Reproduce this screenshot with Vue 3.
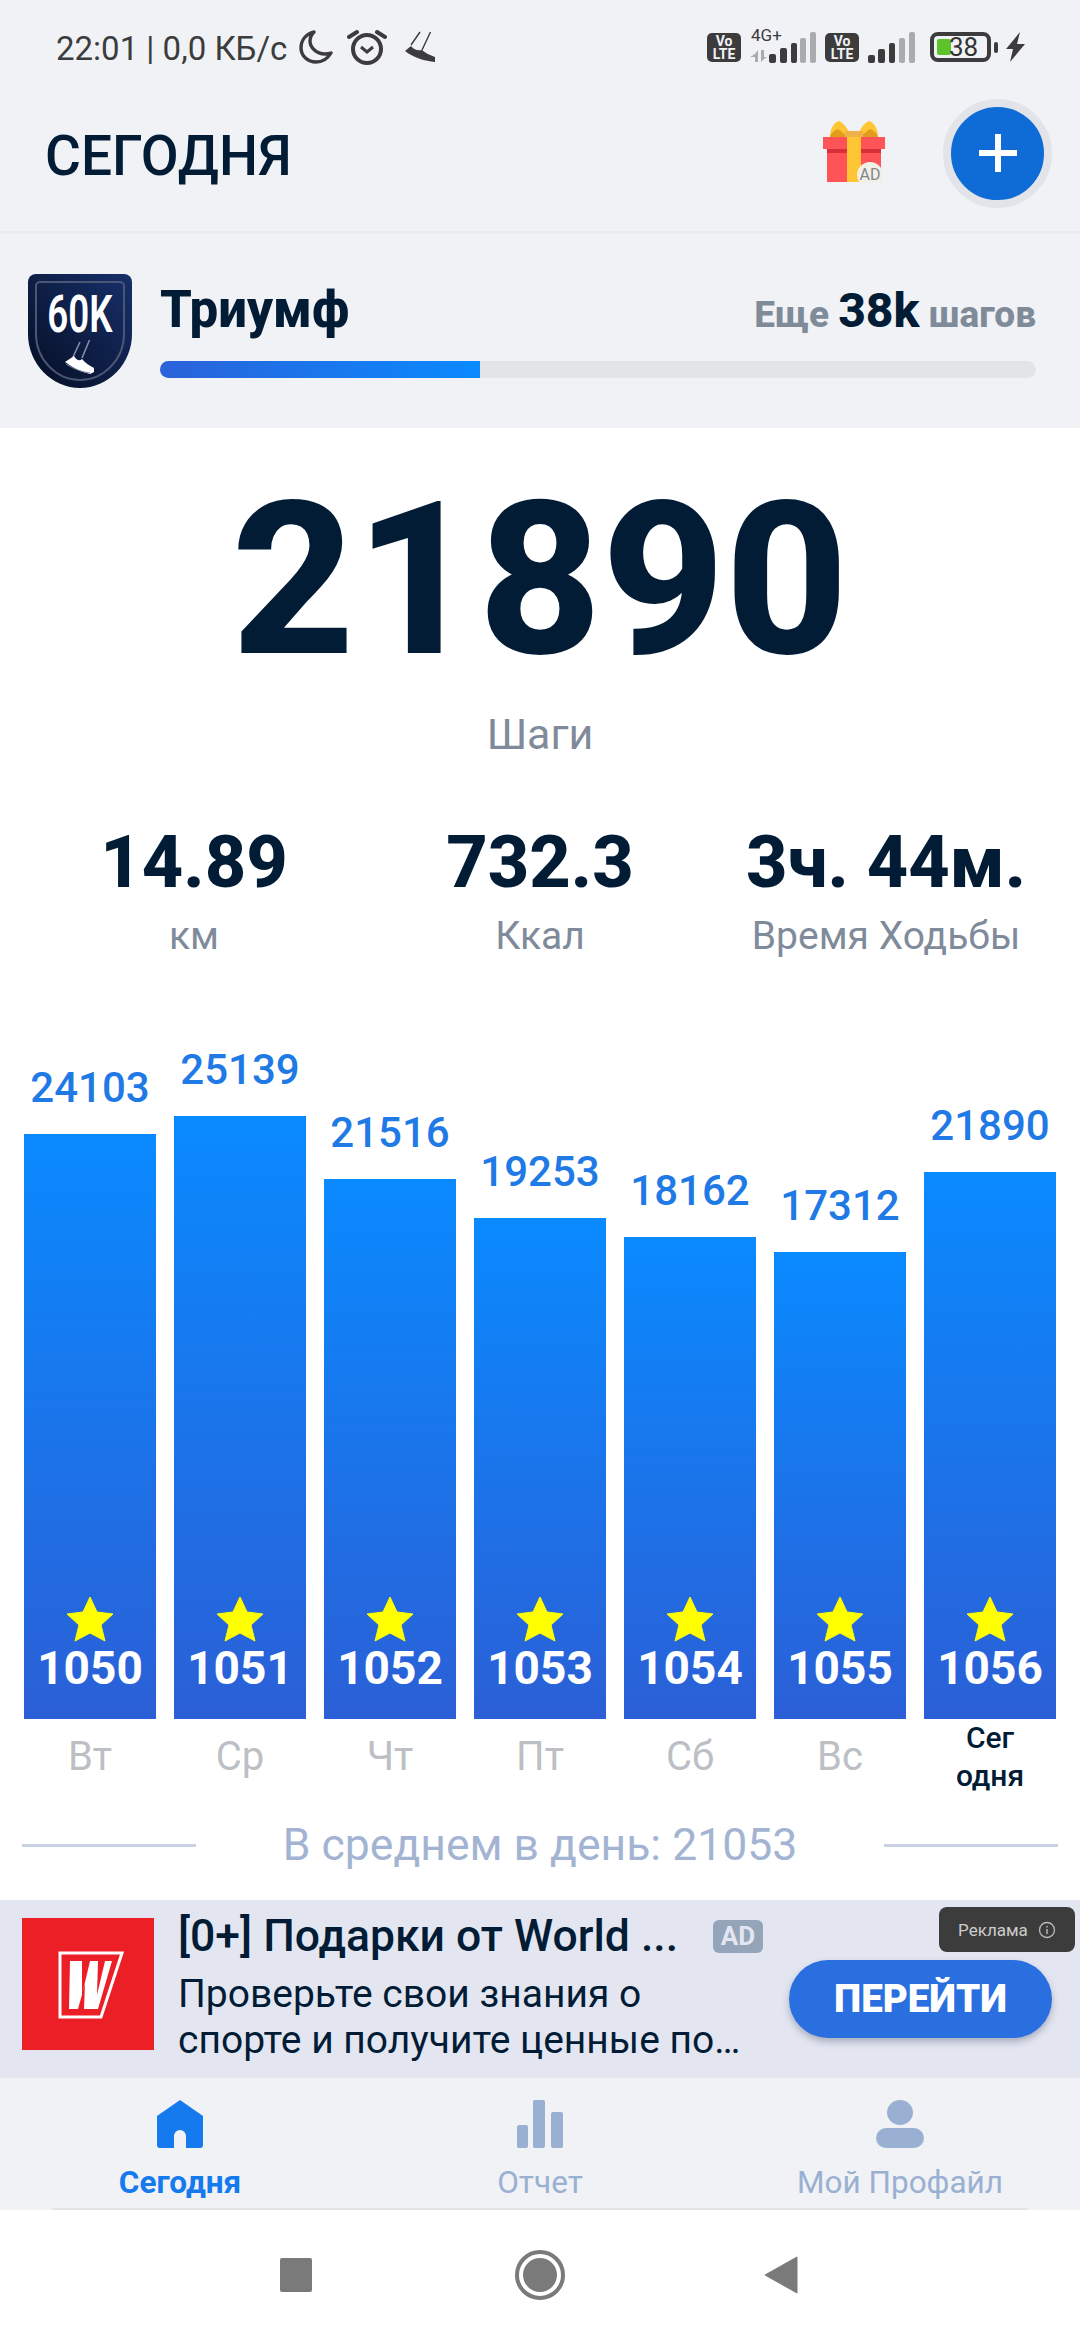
<script setup>
const days = [
  { steps: 24103, h: 585, num: 1050, label: 'Вт' },
  { steps: 25139, h: 603, num: 1051, label: 'Ср' },
  { steps: 21516, h: 540, num: 1052, label: 'Чт' },
  { steps: 19253, h: 501, num: 1053, label: 'Пт' },
  { steps: 18162, h: 482, num: 1054, label: 'Сб' },
  { steps: 17312, h: 467, num: 1055, label: 'Вс' },
  { steps: 21890, h: 547, num: 1056, label: 'Сег одня', today: true }
]
const stats = [
  { value: '14.89', label: 'км' },
  { value: '732.3', label: 'Ккал' },
  { value: '3ч. 44м.', label: 'Время Ходьбы' }
]
</script>

<template>
  <div class="page">
    <div class="top">
      <div class="status">
        <span class="time">22:01 | 0,0 КБ/с</span>
        <svg class="st-moon" viewBox="0 0 34 34"><path d="M15 2C7 4 2 10 2 18c0 8 7 14 15 14 7 0 12-4 15-9-2 1-4 1-6 1-9 0-15-7-15-13 0-3 1-6 4-9z" fill="none" stroke="#3c3c3c" stroke-width="3.4" stroke-linejoin="round"/></svg>
        <svg class="st-alarm" viewBox="0 0 40 36"><circle cx="20" cy="20" r="14" fill="none" stroke="#3c3c3c" stroke-width="4"/><path d="M14 18l6 5 6-5" fill="none" stroke="#3c3c3c" stroke-width="3"/><path d="M2 8l8-5M38 8l-8-5" stroke="#3c3c3c" stroke-width="4" stroke-linecap="round"/></svg>
        <svg class="st-shoe" viewBox="0 0 31 33"><path d="M15 1L6 14M25.500 1L17 19" stroke="#3c3c3c" stroke-width="1.400" fill="none"/><path d="M0 20l6-5c3 4 7 5 11 4 3 3 8 5 13 7v5C20 30 9 27 0 20z" fill="#3c3c3c"/></svg>
        <div class="st-right">
          <span class="volte">Vo<br />LTE</span>
          <div class="net">
            <span class="net-label">4G+</span>
            <svg width="66" height="31" viewBox="0 0 66 31"><path d="M5 22l-5 3h5v5h3V18zM11 18v12l3-3 3-2h-3v-7z" fill="#a9abae"/><rect x="19" y="22" width="7" height="9" rx="2" fill="#3c3c3c"/><rect x="30" y="16" width="7" height="15" rx="2" fill="#3c3c3c"/><rect x="41" y="11" width="6" height="20" rx="2" fill="#3c3c3c"/><rect x="50" y="6" width="6" height="25" rx="2" fill="#a9abae"/><rect x="60" y="0" width="6" height="31" rx="2" fill="#a9abae"/></svg>
          </div>
          <span class="volte">Vo<br />LTE</span>
          <svg class="sig2" width="48" height="31" viewBox="0 0 48 31"><rect x="0" y="23" width="7" height="8" rx="2" fill="#3c3c3c"/><rect x="10" y="17" width="7" height="14" rx="2" fill="#3c3c3c"/><rect x="21" y="11" width="6" height="20" rx="2" fill="#3c3c3c"/><rect x="31" y="6" width="6" height="25" rx="2" fill="#a9abae"/><rect x="41" y="0" width="6" height="31" rx="2" fill="#a9abae"/></svg>
          <div class="battery"><span class="batt-fill"></span><span class="batt-num">38</span></div>
          <span class="batt-nub"></span>
          <svg class="bolt" width="19" height="30" viewBox="0 0 19 30"><path d="M14 0L0 17h7l-3 13 15-18h-8z" fill="#3c3c3c"/></svg>
        </div>
      </div>
      <div class="header">
        <h1>СЕГОДНЯ</h1>
        <div class="gift">
          <svg width="62" height="62" viewBox="0 0 62 62">
            <path d="M7 16C7 8 11 1 16 0c5 2 9 8 11 14l-2 2zM55 16c0-8-4-15-9-16-5 2-9 8-11 14l2 2z" fill="#fdc632"/>
            <path d="M7 16c1-4 5-7 8-8 3 2 7 5 9 8zM55 16c-1-4-5-7-8-8-3 2-7 5-9 8z" fill="#e39c1e"/>
            <rect x="22" y="10" width="18" height="6" fill="#f0b247"/>
            <rect x="0" y="16" width="62" height="12" fill="#fe5357"/>
            <rect x="4" y="28" width="54" height="33" fill="#fe5357"/>
            <rect x="4" y="28" width="54" height="4" fill="#d8303a"/>
            <rect x="24" y="16" width="14" height="45" fill="#fdc632"/>
            <circle cx="47" cy="54" r="13" fill="#f1f1ea"/>
          </svg>
          <span class="gift-ad">AD</span>
        </div>
        <div class="add"><svg width="40" height="40" viewBox="0 0 40 40"><path d="M20 1v38M1 20h38" stroke="#fff" stroke-width="6"/></svg></div>
      </div>
      <div class="achieve">
        <div class="badge">
          <svg width="104" height="114" viewBox="0 0 104 114">
            <defs>
              <linearGradient id="badgeBg" x1="1" y1="0" x2="0" y2="1"><stop offset="0" stop-color="#17306b"/><stop offset="1" stop-color="#050d22"/></linearGradient>
            </defs>
            <path d="M8 0h88a8 8 0 0 1 8 8v52c0 30-24 54-52 54S0 90 0 60V8a8 8 0 0 1 8-8z" fill="url(#badgeBg)"/>
            <path d="M12 8h80a4 4 0 0 1 4 4v48c0 25-20 46-44 46S8 85 8 60V12a4 4 0 0 1 4-4z" fill="none" stroke="#4b5674" stroke-width="2"/>
            <path d="M52 68l-7 15M61.500 66L54 84" stroke="#8b93a8" stroke-width="1.500" fill="none"/>
            <path d="M37 88l9-6c3 5 6 5 8 3 3 4 8 7 12 9v4l-4 2c-9-2-18-7-25-12z" fill="#fff"/>
            <path d="M38 90c8 5 16 8 24 9" stroke="#7c859c" stroke-width="1" fill="none"/>
          </svg>
          <span class="badge-text">60K</span>
        </div>
        <div class="achieve-main">
          <div class="achieve-top">
            <span class="ach-title">Триумф</span>
            <span class="ach-left">Еще <b>38k</b> шагов</span>
          </div>
          <div class="track"><div class="fill"></div></div>
        </div>
      </div>
    </div>

    <div class="content">
      <div class="big">21890</div>
      <div class="big-label">Шаги</div>
      <div class="stats">
        <div v-for="s in stats" :key="s.label" class="stat">
          <div class="stat-val">{{ s.value }}</div>
          <div class="stat-label">{{ s.label }}</div>
        </div>
      </div>
      <div class="chart">
        <div v-for="d in days" :key="d.num" class="col">
          <div class="col-steps">{{ d.steps }}</div>
          <div class="bar" :style="{ height: d.h + 'px' }">
            <svg class="star" width="48" height="45" viewBox="0 0 48 45"><path d="M24 0l7 15 16 2-12 11 4 16-15-8-15 8 4-16L1 17l16-2z" fill="#ff0" stroke="#ff0" stroke-width="1" stroke-linejoin="round"/></svg>
            <div class="bar-num">{{ d.num }}</div>
          </div>
          <div class="day" :class="{ today: d.today }">{{ d.label }}</div>
        </div>
      </div>
      <div class="avg">
        <span class="avg-line"></span>
        <span class="avg-text">В среднем в день: 21053</span>
        <span class="avg-line"></span>
      </div>
    </div>

    <div class="ad">
      <svg class="ad-logo" width="132" height="132" viewBox="0 0 132 132">
        <rect width="132" height="132" fill="#ec1e26"/>
        <path d="M38 35h62l-21 64H38z" fill="none" stroke="#fff" stroke-width="3"/>
        <path d="M48 43h12v34l8-34h8l-1 34 8-34h7L76 91H62l1-25-7 25H47z" fill="#fff"/>
      </svg>
      <div class="ad-text">
        <div class="ad-title"><span>[0+] Подарки от World ...</span><span class="ad-tag">AD</span></div>
        <div class="ad-sub">Проверьте свои знания о<br />спорте и получите ценные по…</div>
      </div>
      <div class="ad-btn">ПЕРЕЙТИ</div>
      <div class="ad-mark">Реклама
        <svg width="18" height="18" viewBox="0 0 18 18"><circle cx="9" cy="9" r="7.500" fill="none" stroke="#bbb" stroke-width="1.300"/><path d="M9 8v5M9 5v1.600" stroke="#bbb" stroke-width="1.400"/></svg>
      </div>
    </div>

    <div class="tabs">
      <div class="tab active">
        <svg width="46" height="48" viewBox="0 0 46 48"><path d="M23 0l23 16v29a3 3 0 0 1-3 3H29V36a6 6 0 0 0-12 0v12H3a3 3 0 0 1-3-3V16z" fill="#157aee"/></svg>
        <span>Сегодня</span>
      </div>
      <div class="tab">
        <svg width="46" height="48" viewBox="0 0 46 48"><rect x="0" y="25" width="11" height="23" rx="2" fill="#9ab0d2"/><rect x="16" y="0" width="12" height="48" rx="2" fill="#9ab0d2"/><rect x="34" y="12" width="12" height="36" rx="2" fill="#9ab0d2"/></svg>
        <span>Отчет</span>
      </div>
      <div class="tab">
        <svg width="48" height="48" viewBox="0 0 48 48"><ellipse cx="24" cy="12.500" rx="13" ry="12.500" fill="#9ab0d2"/><rect x="0" y="28" width="48" height="20" rx="10" fill="#9ab0d2"/></svg>
        <span>Мой Профайл</span>
      </div>
    </div>

    <div class="nav">
      <span class="nav-square"></span>
      <svg class="nav-home" width="50" height="50" viewBox="0 0 50 50"><circle cx="25" cy="25" r="23" fill="none" stroke="#7a7a7a" stroke-width="4"/><circle cx="25" cy="25" r="17" fill="#7a7a7a"/></svg>
      <svg width="34" height="38" viewBox="0 0 34 38"><path d="M33 1v36L1 19z" fill="#7a7a7a" stroke="#7a7a7a" stroke-linejoin="round"/></svg>
    </div>
  </div>
</template>

<style>
html, body { margin: 0; background: #fff; }
</style>

<style scoped>
.page {
  width: 1080px;
  height: 2340px;
  overflow: hidden;
  display: flex;
  flex-direction: column;
  font-family: Roboto, "Noto Sans", sans-serif;
  color: #021c36;
}
.top { background: #f0f2f6; height: 428px; flex: none; display: flex; flex-direction: column; }

.status {
  height: 96px;
  box-sizing: border-box;
  padding: 28px 0 0 56px;
  display: flex;
  align-items: flex-start;
  color: #3c3c3c;
}
.time { font-size: 33px; line-height: 40px; margin-top: 1px; }
.st-moon { width: 34px; height: 34px; margin: 2px 0 0 12px; }
.st-alarm { width: 40px; height: 36px; margin: 1px 0 0 14px; }
.st-shoe { width: 31px; height: 33px; margin: 3px 0 0 18px; }
.st-right { margin-left: auto; margin-right: 55px; display: flex; align-items: flex-start; height: 36px; padding-top: 4px; }
.volte {
  width: 34px;
  height: 29px;
  border-radius: 5px;
  background: #3c3c3c;
  color: #f0f2f6;
  font-size: 14px;
  font-weight: 700;
  line-height: 13px;
  text-align: center;
  padding-top: 2px;
  box-sizing: border-box;
  margin-top: 1px;
}
.net { position: relative; width: 66px; margin-left: 9px; margin-right: 9px; }
.net svg { display: block; }
.net-label { position: absolute; top: -6px; left: 1px; font-size: 17px; line-height: 18px; }
.sig2 { margin-left: 9px; }
.battery {
  position: relative;
  width: 61px;
  height: 30px;
  box-sizing: border-box;
  border: 4px solid #3c3c3c;
  border-radius: 8px;
  margin-left: 14px;
}
.batt-fill { position: absolute; left: 3px; top: 3px; width: 14px; height: 16px; background: #5cc32b; border-radius: 2px; }
.batt-num { position: absolute; left: 15px; top: -2px; font-size: 26px; line-height: 26px; color: #333; }
.batt-nub { width: 4px; height: 11px; background: #3c3c3c; border-radius: 2px; margin: 10px 0 0 3px; }
.bolt { margin: 0 0 0 8px; }

.header { height: 135px; flex: none; display: flex; align-items: center; padding: 0 28px 0 45px; border-bottom: 3px solid #e9ebef; }
.header h1 { margin: 0 auto 16px 0; font-size: 55px; font-weight: 500; line-height: 60px; }
.gift { position: relative; width: 62px; height: 62px; margin: -24px 58px 0 0; }
.gift svg { display: block; }
.gift-ad { position: absolute; left: 36px; top: 45px; width: 22px; font-size: 16px; line-height: 18px; text-align: center; color: #858585; }
.add {
  width: 93px;
  height: 93px;
  margin-top: -21px;
  border-radius: 50%;
  background: #0f6bd6;
  border: 8px solid #e2e4e9;
  display: flex;
  align-items: center;
  justify-content: center;
}

.achieve { display: flex; padding: 40px 44px 0 28px; }
.badge { position: relative; width: 104px; height: 114px; flex: none; }
.badge svg { display: block; }
.badge-text {
  position: absolute;
  left: 0;
  top: 16px;
  width: 104px;
  font-size: 51px;
  font-weight: 600;
  line-height: 50px;
  text-align: center;
  color: #fff;
  transform: scaleX(0.72);
}
.achieve-main { margin-left: 28px; flex: 1; }
.achieve-top { display: flex; align-items: baseline; justify-content: space-between; height: 81px; line-height: 60px; margin-top: 6px; }
.ach-title { font-size: 51px; font-weight: 800; }
.ach-left { font-size: 37px; font-weight: 800; color: #808b9a; }
.ach-left b { font-size: 48px; font-weight: 800; color: #021c36; }
.track { height: 17px; border-radius: 9px; background: #e3e4e6; overflow: hidden; }
.fill { width: 320px; height: 100%; background: linear-gradient(90deg, #2b62d9, #0a8aff); }

.content { flex: none; background: #fff; display: flex; flex-direction: column; }
.big { font-size: 214px; font-weight: 800; line-height: 212px; text-align: center; margin-top: 46px; }
.big-label { font-size: 43px; line-height: 50px; text-align: center; color: #7f8b9a; margin-top: 23px; }
.stats { display: grid; grid-template-columns: repeat(3, 346px); justify-content: center; margin-top: 62px; }
.stat { text-align: center; }
.stat-val { font-size: 72px; font-weight: 800; line-height: 84px; }
.stat-label { font-size: 39px; line-height: 46px; color: #7f8b9a; margin-top: 8px; }

.chart { height: 745px; margin-top: 87px; padding: 0 24px; display: grid; grid-template-columns: repeat(7, 132px); gap: 18px; align-items: end; }
.col { display: flex; flex-direction: column; align-items: center; position: relative; padding-bottom: 83px; }
.col-steps { font-size: 42px; font-weight: 500; line-height: 48px; color: #1f7ae6; margin-bottom: 22px; white-space: nowrap; }
.bar {
  width: 100%;
  background: linear-gradient(180deg, #0a8aff, #2b5fd6);
  display: flex;
  flex-direction: column;
  align-items: center;
  justify-content: flex-end;
  padding-bottom: 29px;
  box-sizing: border-box;
}
.star { display: block; }
.bar-num { font-size: 46px; font-weight: 700; line-height: 44px; color: #fff; margin-top: 4px; }
.day { position: absolute; left: 0; right: 0; bottom: 12px; font-size: 40px; line-height: 46px; text-align: center; color: #bcbfc4; height: 56px; }
.day.today { font-size: 30px; font-weight: 500; line-height: 38px; color: #021c36; bottom: 7px; height: 76px; padding: 0 30px; }

.avg { display: flex; align-items: center; justify-content: space-between; padding: 0 22px; height: 50px; margin: 29px 0 30px; }
.avg-line { width: 174px; height: 3px; background: #c9d2e3; }
.avg-text { font-size: 44.500px; color: #a3b4d3; }

.ad { position: relative; height: 178px; background: #e3e6f1; display: flex; flex: none; padding: 18px 0 0 22px; box-sizing: border-box; }
.ad-logo { flex: none; display: block; }
.ad-text { margin-left: 24px; }
.ad-title { font-size: 44.500px; font-weight: 500; line-height: 50px; margin-top: -7px; white-space: nowrap; display: flex; align-items: center; }
.ad-tag {
  margin-left: 35px;
  width: 50px;
  height: 33px;
  border-radius: 6px;
  background: #94a5ba;
  color: #e3e6f1;
  font-size: 26px;
  font-weight: 700;
  line-height: 33px;
  text-align: center;
}
.ad-sub { font-size: 39px; line-height: 46px; margin-top: 10px; white-space: nowrap; }
.ad-btn {
  position: absolute;
  left: 789px;
  top: 60px;
  width: 263px;
  height: 78px;
  border-radius: 39px;
  background: #2a6fdf;
  color: #fff;
  font-size: 38.500px;
  font-weight: 900;
  line-height: 78px;
  text-align: center;
  box-shadow: 0 4px 7px rgba(60, 70, 100, 0.35);
}
.ad-mark {
  position: absolute;
  left: 939px;
  top: 7px;
  width: 136px;
  height: 45px;
  border-radius: 8px;
  background: #3c3c3c;
  color: #ccc;
  font-size: 17px;
  display: flex;
  align-items: center;
  justify-content: center;
  gap: 10px;
}

.tabs { height: 132px; flex: none; background: #f0f2f5; display: grid; grid-template-columns: 360px 360px 360px; position: relative; }
.tabs::after { content: ""; position: absolute; left: 52px; right: 52px; bottom: 0; height: 2px; background: #e3e4e6; }
.tab { display: flex; flex-direction: column; align-items: center; padding-top: 22px; color: #9ab0d2; font-size: 31.500px; }
.tab svg { display: block; }
.tab span { line-height: 36px; margin-top: 17px; }
.tab.active { color: #157aee; font-weight: 700; }

.nav { flex: 1; background: #fff; display: flex; align-items: center; padding-left: 280px; }
.nav svg { display: block; }
.nav-home { margin: 0 199px 0 203px; }
.nav-square { width: 32px; height: 34px; background: #7a7a7a; border-radius: 2px; }
</style>
